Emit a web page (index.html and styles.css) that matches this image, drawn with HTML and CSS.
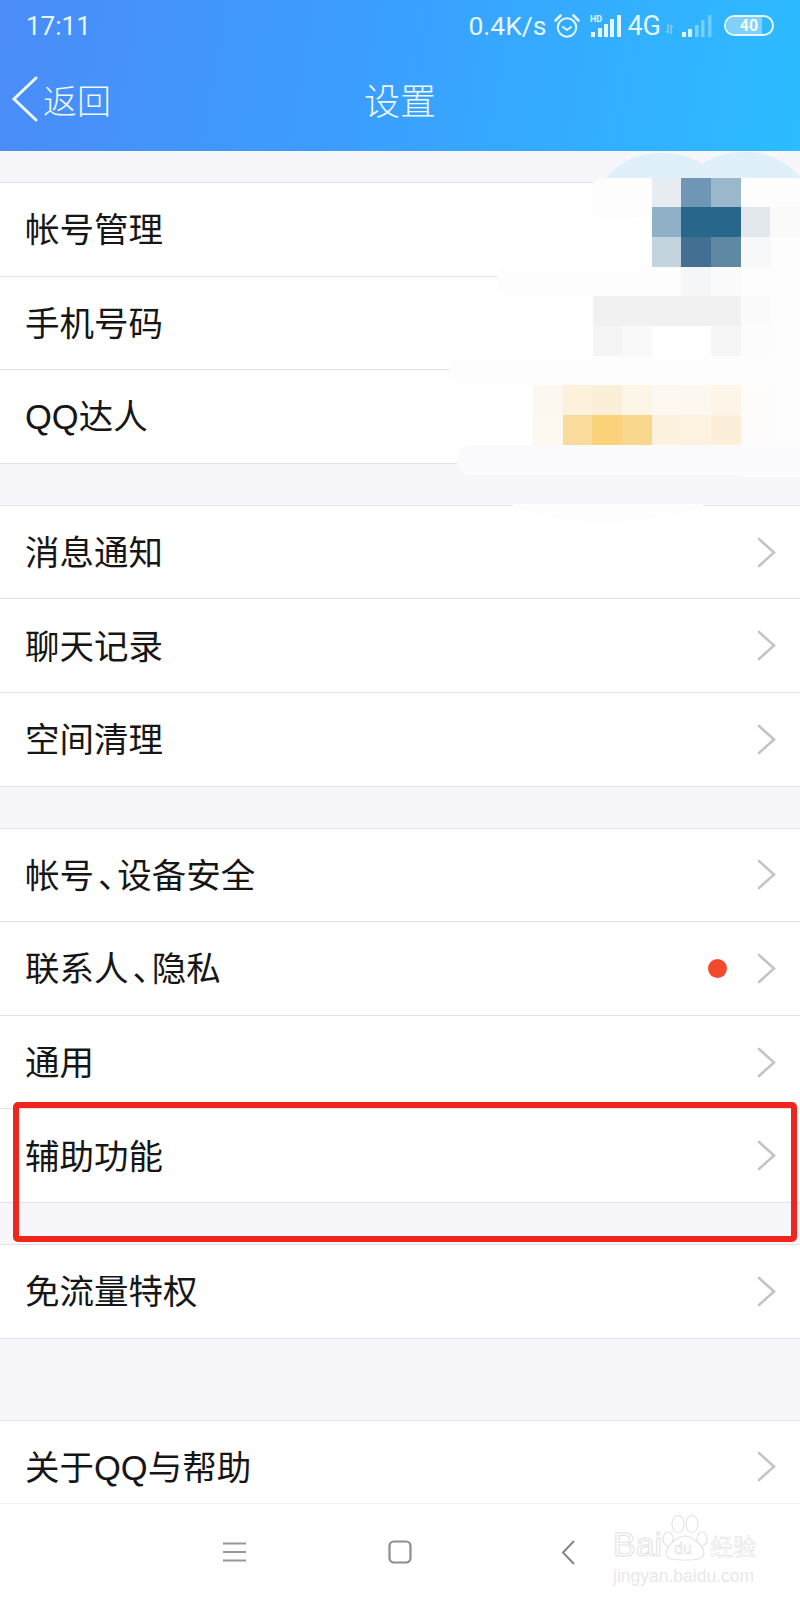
FILE: index.html
```html
<!DOCTYPE html>
<html lang="zh">
<head>
    <meta charset="utf-8">
    <title>设置</title>
    <link rel="stylesheet" href="styles.css">
</head>
<body>
<div class="screen">

    <div class="header">
        <div class="status">
            <span class="time">17:11</span>
            <div class="status-right">
                <span class="speed">0.4K/s</span>
                <svg class="ico-alarm" width="26" height="26" viewBox="0 0 26 26" fill="none" stroke="#e6f6ff" stroke-width="2">
                    <circle cx="13" cy="14.5" r="9.2"/>
                    <path d="M9 14l4 3 4-3" stroke-linecap="round" stroke-linejoin="round"/>
                    <path d="M1.5 7.5L6.5 2.5M24.5 7.5L19.5 2.5" stroke-width="2.6" stroke-linecap="round"/>
                </svg>
                <svg class="ico-signal" width="32" height="24" viewBox="0 0 32 24" fill="#e6f6ff">
                    <text x="0" y="8" class="hd">HD</text>
                    <rect x="1" y="18" width="4" height="5"/>
                    <rect x="8" y="14" width="4" height="9"/>
                    <rect x="14" y="10" width="4" height="13"/>
                    <rect x="20" y="5" width="4" height="18"/>
                    <rect x="27" y="1" width="4" height="22"/>
                </svg>
                <span class="net">4G</span>
                <svg class="ico-arrows" width="7" height="10" viewBox="0 0 7 10" stroke="#a9dcfb" stroke-width="1" fill="none">
                    <path d="M2 0v9M0 7l2 2M5 10V1M7 3L5 1"/>
                </svg>
                <svg class="ico-signal-off" width="30" height="22" viewBox="0 0 30 22" fill="#e6f6ff">
                    <rect x="0" y="17" width="4" height="5"/>
                    <rect x="6" y="14" width="4" height="8" opacity=".9"/>
                    <rect x="13" y="10" width="3.500" height="12" opacity=".45"/>
                    <rect x="19" y="5" width="3.500" height="17" opacity=".4"/>
                    <rect x="26" y="0" width="3.500" height="22" opacity=".35"/>
                </svg>
                <div class="battery"><span class="battery-fill"></span><span class="battery-num">40</span></div>
            </div>
        </div>
        <div class="titlebar">
            <svg class="ico-back" width="28" height="46" viewBox="0 0 28 46" fill="none" stroke="#eef8ff" stroke-width="3" stroke-linecap="round">
                <path d="M25 2L3 23l22 21"/>
            </svg>
            <span class="back-text">返回</span>
            <span class="title">设置</span>
        </div>
    </div>

    <div class="list">
        <div class="group first">
            <div class="row"><span>帐号管理</span></div>
            <div class="row"><span>手机号码</span></div>
            <div class="row"><span>QQ达人</span></div>
        </div>

        <div class="group">
            <div class="row"><span>消息通知</span><svg class="chev" viewBox="0 0 19 31"><path d="M2 2l15 13.500L2 29"/></svg></div>
            <div class="row"><span>聊天记录</span><svg class="chev" viewBox="0 0 19 31"><path d="M2 2l15 13.500L2 29"/></svg></div>
            <div class="row"><span>空间清理</span><svg class="chev" viewBox="0 0 19 31"><path d="M2 2l15 13.500L2 29"/></svg></div>
        </div>

        <div class="group">
            <div class="row"><span>帐号<b class="pun">、</b>设备安全</span><svg class="chev" viewBox="0 0 19 31"><path d="M2 2l15 13.500L2 29"/></svg></div>
            <div class="row"><span>联系人<b class="pun">、</b>隐私</span><i class="dot"></i><svg class="chev" viewBox="0 0 19 31"><path d="M2 2l15 13.500L2 29"/></svg></div>
            <div class="row"><span>通用</span><svg class="chev" viewBox="0 0 19 31"><path d="M2 2l15 13.500L2 29"/></svg></div>
            <div class="row"><span>辅助功能</span><svg class="chev" viewBox="0 0 19 31"><path d="M2 2l15 13.500L2 29"/></svg></div>
        </div>

        <div class="group">
            <div class="row"><span>免流量特权</span><svg class="chev" viewBox="0 0 19 31"><path d="M2 2l15 13.500L2 29"/></svg></div>
        </div>

        <div class="group spaced">
            <div class="row"><span>关于QQ与帮助</span><svg class="chev" viewBox="0 0 19 31"><path d="M2 2l15 13.500L2 29"/></svg></div>
        </div>
    </div>

    <div class="navbar">
        <svg class="nav-menu" width="23" height="20" viewBox="0 0 23 20" stroke="#989898" stroke-width="2">
            <path d="M0 1.500h23M0 10h23M0 18.500h23"/>
        </svg>
        <svg class="nav-home" width="24" height="24" viewBox="0 0 24 24" fill="none" stroke="#8c8c8c" stroke-width="2.200">
            <rect x="1.500" y="1.500" width="21" height="21" rx="4.500"/>
        </svg>
        <svg class="nav-back" width="14" height="25" viewBox="0 0 14 25" fill="none" stroke="#858585" stroke-width="2">
            <path d="M13 1L2 12.500 13 24"/>
        </svg>
    </div>

    <!-- mosaic over the account info -->
    <svg class="mosaic" width="800" height="400" viewBox="0 150 800 400">
        <path fill="#e0f0fb" d="M605 179C620 160 640 153 662 153c18 0 30 4 40 11 12-8 26-12 44-12 22 0 42 10 54 25v2H605z"/>
        <rect x="590" y="178" width="220" height="40" rx="12" fill="#fdfdfd"/>
        <rect x="741" y="207" width="59" height="270" fill="#fdfdfd"/>
        <rect x="497" y="267" width="320" height="30" rx="12" fill="#fdfdfd"/>
        <rect x="450" y="355" width="370" height="30" rx="12" fill="#fdfdfd"/>
        <rect x="457" y="445" width="360" height="30" rx="12" fill="#fbfbfd"/>
        <rect x="513" y="504" width="190" height="6" fill="#fdfdfe"/>
        <path fill="#fdfdfe" d="M525 510H691Q650 522 600 522 560 522 525 510z"/>

        <rect x="652" y="178" width="30" height="30" fill="#e7ecf1"/>
        <rect x="681" y="178" width="30" height="30" fill="#6f97b5"/>
        <rect x="711" y="178" width="30" height="30" fill="#9ab7cc"/>

        <rect x="652" y="207" width="30" height="30" fill="#8fb0c6"/>
        <rect x="681" y="207" width="30" height="30" fill="#27678c"/>
        <rect x="711" y="207" width="30" height="30" fill="#27678c"/>
        <rect x="741" y="207" width="30" height="30" fill="#e3e8ed"/>
        <rect x="770" y="207" width="30" height="30" fill="#fafafb"/>

        <rect x="652" y="237" width="30" height="30" fill="#c3d4df"/>
        <rect x="681" y="237" width="30" height="30" fill="#436f92"/>
        <rect x="711" y="237" width="30" height="30" fill="#5f88a2"/>
        <rect x="741" y="237" width="30" height="30" fill="#f7f8f9"/>

        <rect x="681" y="267" width="30" height="30" fill="#f5f6f8"/>
        <rect x="711" y="267" width="30" height="30" fill="#fbfbfc"/>

        <rect x="593" y="296" width="148" height="30" fill="#f1f1f2"/>
        <rect x="741" y="296" width="30" height="30" fill="#fbfbfb"/>
        <rect x="593" y="326" width="30" height="30" fill="#f5f5f6"/>
        <rect x="622" y="326" width="30" height="30" fill="#f9f9fa"/>
        <rect x="711" y="326" width="30" height="30" fill="#f6f6f7"/>
        <rect x="741" y="326" width="30" height="30" fill="#fcfcfc"/>

        <rect x="533" y="385" width="30" height="30" fill="#fdf8ef"/>
        <rect x="563" y="385" width="30" height="30" fill="#fdf1dc"/>
        <rect x="592" y="385" width="30" height="30" fill="#fbefd9"/>
        <rect x="622" y="385" width="30" height="30" fill="#fdf5e6"/>
        <rect x="652" y="385" width="30" height="30" fill="#fdf9f1"/>
        <rect x="681" y="385" width="30" height="30" fill="#fdf8ef"/>
        <rect x="711" y="385" width="30" height="30" fill="#fdf6e8"/>
        <rect x="741" y="385" width="30" height="30" fill="#fdfcfa"/>

        <rect x="533" y="415" width="30" height="30" fill="#fef9f0"/>
        <rect x="563" y="415" width="30" height="30" fill="#f9dc9c"/>
        <rect x="592" y="415" width="30" height="30" fill="#f9d27a"/>
        <rect x="622" y="415" width="30" height="30" fill="#f9d78c"/>
        <rect x="652" y="415" width="30" height="30" fill="#fcf1dc"/>
        <rect x="681" y="415" width="30" height="30" fill="#fcf2df"/>
        <rect x="711" y="415" width="30" height="30" fill="#fbefd9"/>
        <rect x="741" y="415" width="30" height="30" fill="#fdfcfa"/>
    </svg>

    <!-- red mark round the row -->
    <div class="redbox"></div>

    <!-- watermark -->
    <div class="watermark">
        <div class="wm-top">
            <span class="wm-bai">Bai</span>
            <svg class="wm-paw" width="46" height="46" viewBox="0 0 46 46" fill="#fff" stroke="#e4e4e4" stroke-width="1.200">
                <ellipse cx="6" cy="24" rx="5" ry="7"/>
                <ellipse cx="16" cy="9" rx="6" ry="8.500"/>
                <ellipse cx="30" cy="9" rx="6" ry="8.500"/>
                <ellipse cx="40" cy="24" rx="5" ry="7"/>
                <path d="M23 21c8 0 19 11 19 17 0 6-7 7-19 7S4 44 4 38c0-6 11-17 19-17z"/>
                <text x="12" y="39" class="wm-du">du</text>
            </svg>
            <span class="wm-jy">经验</span>
        </div>
        <div class="wm-url">jingyan.baidu.com</div>
    </div>

</div>
</body>
</html>
```

FILE: styles.css
```css
* {
    box-sizing: border-box;
}
body {
    margin: 0;
    font-family: "Liberation Sans", "Noto Sans CJK SC", sans-serif;
    color: #161616;
}
.screen {
    position: relative;
    width: 800px;
    height: 1600px;
    display: flex;
    flex-direction: column;
    overflow: hidden;
    background: #fff;
}

/* top blue part */
.header {
    height: 151px;
    flex: none;
    color: #eef8ff;
    background: linear-gradient(100deg, #4b8bf8 0%, #3b9efe 45%, #2cbcff 100%);
}
.status {
    height: 51px;
    padding: 0 26px 0 26px;
    display: flex;
    align-items: center;
    justify-content: space-between;
    font-family: Roboto, sans-serif;
}
.time {
    font-size: 26px;
    color: #e6f6ff;
}
.status-right {
    display: flex;
    align-items: center;
    color: #e6f6ff;
}
.speed {
    font-size: 26.5px;
}
.net {
    font-size: 27px;
    margin-left: 5px;
}
.ico-alarm {
    margin-left: 8px;
}
.ico-signal {
    margin-left: 10px;
}
.hd {
    font-family: Roboto, sans-serif;
    font-size: 9px;
    font-weight: 700;
}
.ico-arrows {
    margin: 6px 0 0 5px;
}
.ico-signal-off {
    margin-left: 9px;
}
.battery {
    position: relative;
    width: 50px;
    height: 21px;
    margin-left: 12px;
    border: 2px solid #e6f6ff;
    border-radius: 11px;
    overflow: hidden;
    text-align: center;
}
.battery-fill {
    position: absolute;
    left: 0;
    top: 0;
    bottom: 0;
    width: 36px;
    background: #7fd0fa;
}
.battery-num {
    position: relative;
    display: block;
    font-size: 16px;
    font-weight: 700;
    line-height: 17px;
    color: #f2fbff;
}
.titlebar {
    height: 100px;
    padding: 0 0 4px 11px;
    position: relative;
    display: flex;
    align-items: center;
}
.back-text {
    margin-left: 4px;
    font-size: 34px;
    font-weight: 300;
}
.title {
    position: absolute;
    left: 0;
    right: 0;
    text-align: center;
    font-size: 36px;
    font-weight: 300;
}

/* settings rows */
.list {
    flex: 1;
    min-height: 0;
    overflow: hidden;
    background: #f6f6fb;
}
.group {
    margin-top: 41px;
    background: #fff;
    border-top: 1px solid #e2e2e6;
}
.group.first {
    margin-top: 31px;
}
.group.spaced {
    margin-top: 81px;
}
.row {
    height: 93.6px;
    padding: 0 24px 0 25px;
    display: flex;
    align-items: center;
    font-size: 34.5px;
    font-weight: 400;
    border-bottom: 1px solid #e2e2e6;
}
.row span {
    flex: 1;
    margin-top: -4px;
}
.pun {
    font-weight: 400;
    font-feature-settings: "halt";
    margin: 0 2px 0 4px;
}
.chev {
    width: 19px;
    height: 31px;
    fill: none;
    stroke: #c4c4c6;
    stroke-width: 2.6;
    stroke-linecap: round;
}
.dot {
    width: 19px;
    height: 19px;
    margin-right: 30px;
    border-radius: 50%;
    background: #f4492c;
}

/* android buttons */
.navbar {
    height: 97px;
    flex: none;
    position: relative;
    background: #fff;
    border-top: 1px solid #f1f1f3;
    display: flex;
    align-items: center;
    padding: 0 0 0 223px;
}
.nav-home {
    margin-left: 142px;
}
.nav-back {
    margin-left: 149px;
}

.mosaic {
    position: absolute;
    left: 0;
    top: 150px;
}
.redbox {
    position: absolute;
    left: 13px;
    top: 1102px;
    width: 784px;
    height: 140px;
    border: 6px solid #f0261c;
    border-radius: 5px;
}
.watermark {
    position: absolute;
    left: 613px;
    top: 1515px;
    width: 145px;
}
.wm-top {
    display: flex;
    align-items: flex-end;
    height: 46px;
    color: #fff;
}
.wm-bai {
    font-size: 34px;
    line-height: 34px;
    -webkit-text-stroke: 1px #e2e2e2;
}
.wm-du {
    font-size: 16px;
    fill: #fff;
    stroke: #e2e2e2;
    stroke-width: .6;
}
.wm-jy {
    font-family: "Noto Sans CJK SC", sans-serif;
    font-size: 23px;
    line-height: 32px;
    margin-left: 2px;
    -webkit-text-stroke: .6px #e2e2e2;
}
.wm-url {
    margin-top: 5px;
    font-size: 17.5px;
    line-height: 20px;
    white-space: nowrap;
    color: #e8e8e8;
}
```
